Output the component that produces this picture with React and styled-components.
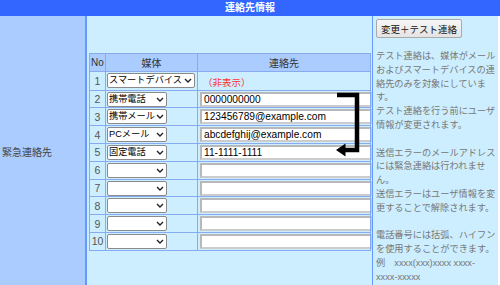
import React from "react";
import styled, { createGlobalStyle } from "styled-components";

const GlobalStyle = createGlobalStyle`
  html, body {
    margin: 0;
    padding: 0;
    background: #ffffff;
    font-family: "Liberation Sans", "Noto Sans CJK JP", sans-serif;
  }
`;

const rows = [
  { no: 1, media: "スマートデバイス", hidden: true },
  { no: 2, media: "携帯電話", value: "0000000000" },
  { no: 3, media: "携帯メール", value: "123456789@example.com" },
  { no: 4, media: "PCメール", value: "abcdefghij@example.com" },
  { no: 5, media: "固定電話", value: "11-1111-1111" },
  { no: 6, media: "" },
  { no: 7, media: "" },
  { no: 8, media: "" },
  { no: 9, media: "" },
  { no: 10, media: "" },
];

const Chevron = () => (
  <ChevronMark width="8" height="5" viewBox="0 0 8 5">
    <polyline points="1,1 4,4 7,1" fill="none" stroke="#222" strokeWidth="1.4" />
  </ChevronMark>
);

export default function App() {
  return (
    <>
      <GlobalStyle />
      <Page>
        <TitleBar>連絡先情報</TitleBar>
        <Body>
          <Label>緊急連絡先</Label>
          <MainCell>
            <TableWrap>
              <ContactTable>
                <thead>
                  <tr>
                    <HeadCell>No</HeadCell>
                    <HeadCell>媒体</HeadCell>
                    <HeadCell>連絡先</HeadCell>
                  </tr>
                </thead>
                <tbody>
                  {rows.map((r) => (
                    <tr key={r.no}>
                      <NoCell>{r.no}</NoCell>
                      <Cell>
                        <SelectBox $wide={r.hidden}>
                          <MediaSelect defaultValue={r.media}>
                            <option value=""></option>
                            <option value="スマートデバイス">スマートデバイス</option>
                            <option value="携帯電話">携帯電話</option>
                            <option value="携帯メール">携帯メール</option>
                            <option value="PCメール">PCメール</option>
                            <option value="固定電話">固定電話</option>
                          </MediaSelect>
                          <Chevron />
                        </SelectBox>
                      </Cell>
                      <Cell>
                        {r.hidden ? (
                          <Hidden>（非表示）</Hidden>
                        ) : (
                          <AddressInput type="text" defaultValue={r.value || ""} />
                        )}
                      </Cell>
                    </tr>
                  ))}
                </tbody>
              </ContactTable>
              <Arrow width="26" height="68" viewBox="0 0 26 68">
                <polyline
                  points="1,4 21,4 21,59 9,59"
                  fill="none"
                  stroke="#000"
                  strokeWidth="4.5"
                  strokeLinejoin="miter"
                />
                <polygon points="0,59 9.5,52.5 9.5,65.5" fill="#000" />
              </Arrow>
            </TableWrap>
          </MainCell>
          <Side>
            <TestButton type="button">変更＋テスト連絡</TestButton>
            <Notes>
              <p>
                テスト連絡は、媒体がメールおよびスマートデバイスの連絡先のみを対象にしています。
                <br />
                テスト連絡を行う前にユーザ情報が変更されます。
              </p>
              <p>
                送信エラーのメールアドレスには緊急連絡は行われません。
                <br />
                送信エラーはユーザ情報を変更することで解除されます。
              </p>
              <p>
                電話番号には括弧、ハイフンを使用することができます。
                <br />
                例　xxxx(xxx)xxxx xxxx-
                <br />
                xxxx-xxxxx
              </p>
            </Notes>
          </Side>
        </Body>
      </Page>
    </>
  );
}

const Page = styled.div`
  width: 500px;
`;

const TitleBar = styled.div`
  height: 16px;
  line-height: 16px;
  background: #3366ff;
  color: #ffffff;
  font-size: 10px;
  font-weight: bold;
  text-align: center;
`;

const Body = styled.div`
  display: grid;
  grid-template-columns: 87px 286px 125px;
`;

const Label = styled.div`
  display: flex;
  align-items: center;
  padding-left: 2px;
  background: #aaccff;
  border-right: 2px solid #6699ff;
  color: #444;
  font-size: 10px;
`;

const MainCell = styled.div`
  display: flex;
  align-items: center;
  padding: 0 2px;
  background: #cceeff;
  border-right: 1px solid #6699ff;
`;

const TableWrap = styled.div`
  position: relative;
`;

const ContactTable = styled.table`
  border-collapse: collapse;
  width: 282px;
  table-layout: fixed;

  & th:nth-child(1) {
    width: 15px;
  }
  & th:nth-child(2) {
    width: 91px;
  }
`;

const HeadCell = styled.th`
  height: 17px;
  padding: 0;
  background: #aaccff;
  border: 1px solid #88aaee;
  color: #333;
  font-size: 10px;
  font-weight: normal;
  text-align: center;
`;

const Cell = styled.td`
  height: 16.8px;
  padding: 0 0 0 1px;
  border: 1px solid #88aaee;
  background: #cceeff;
`;

const NoCell = styled(Cell)`
  padding: 0;
  text-align: center;
  color: #555;
  font-size: 10.5px;
`;

const SelectBox = styled.span`
  position: relative;
  display: block;
  width: ${({ $wide }) => ($wide ? "88px" : "60px")};
  height: 15px;
`;

const MediaSelect = styled.select`
  appearance: none;
  display: block;
  box-sizing: border-box;
  width: 100%;
  height: 15px;
  padding: 0 10px 0 1px;
  border: 1px solid #8a8a8a;
  border-radius: 2px;
  background: #fff;
  color: #000;
  font-family: "Liberation Sans", "Noto Sans CJK JP", sans-serif;
  font-size: 9.2px;
  line-height: 13px;
`;

const ChevronMark = styled.svg`
  position: absolute;
  right: 3px;
  top: 5px;
  pointer-events: none;
`;

const AddressInput = styled.input`
  display: block;
  box-sizing: border-box;
  width: 172px;
  height: 15px;
  margin-left: 1px;
  padding: 0 2px;
  border: 2px solid #cccccc;
  border-top-color: #b8b8b8;
  border-left-color: #b8b8b8;
  background: #fff;
  color: #000;
  font-family: "Liberation Sans", "Noto Sans CJK JP", sans-serif;
  font-size: 10.2px;
`;

const Hidden = styled.span`
  padding-left: 4px;
  color: #ff3333;
  font-size: 9.5px;
`;

const Arrow = styled.svg`
  position: absolute;
  left: 247px;
  top: 38px;
`;

const Side = styled.div`
  padding: 3px 0 3px 3px;
  background: #cceeff;
  font-family: "Liberation Sans", "Noto Sans CJK JP", sans-serif;
`;

const TestButton = styled.button`
  display: block;
  height: 19px;
  padding: 0 4px;
  border: 1px solid #aaaaaa;
  border-radius: 2px;
  background: linear-gradient(#f6f6f6, #e4e4e4);
  color: #111;
  font-family: "Liberation Sans", "Noto Sans CJK JP", sans-serif;
  font-size: 9.5px;
`;

const Notes = styled.div`
  margin-top: 12px;
  color: #777;
  font-size: 9.2px;
  line-height: 13.8px;

  & p {
    margin: 0 0 13.8px;
  }
  & p:last-child {
    margin-bottom: 0;
  }
`;
